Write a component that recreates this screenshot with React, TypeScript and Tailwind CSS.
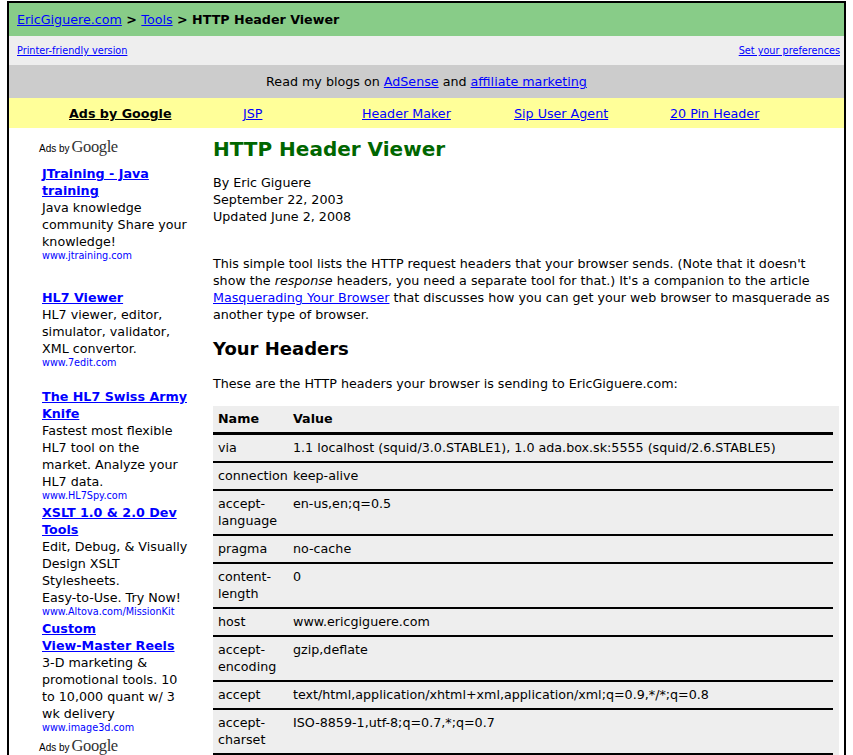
import React from "react";

const ads = [
  {
    title: <>JTraining - Java training</>,
    desc: <>Java knowledge community Share your knowledge!</>,
    url: "www.jtraining.com",
    gap: "pb-[25px]",
  },
  {
    title: <>HL7 Viewer</>,
    desc: <>HL7 viewer, editor, simulator, validator, XML convertor.</>,
    url: "www.7edit.com",
    gap: "pb-[17px]",
  },
  {
    title: <>The HL7 Swiss Army Knife</>,
    desc: <>Fastest most flexible HL7 tool on the market. Analyze your HL7 data.</>,
    url: "www.HL7Spy.com",
    gap: "",
  },
  {
    title: <>XSLT 1.0 &amp; 2.0 Dev Tools</>,
    desc: (
      <>
        Edit, Debug, &amp; Visually Design XSLT Stylesheets.{" "}
        <span className="whitespace-nowrap">Easy-to-Use.</span> Try Now!
      </>
    ),
    url: "www.Altova.com/MissionKit",
    gap: "",
  },
  {
    title: (
      <>
        Custom <span className="whitespace-nowrap">View-Master Reels</span>
      </>
    ),
    desc: <>3-D marketing &amp; promotional tools. 10 to 10,000 quant w/ 3 wk delivery</>,
    url: "www.image3d.com",
    gap: "",
  },
];

const headers = [
  ["via", "1.1 localhost (squid/3.0.STABLE1), 1.0 ada.box.sk:5555 (squid/2.6.STABLE5)"],
  ["connection", "keep-alive"],
  ["accept-language", "en-us,en;q=0.5"],
  ["pragma", "no-cache"],
  ["content-length", "0"],
  ["host", "www.ericgiguere.com"],
  ["accept-encoding", "gzip,deflate"],
  ["accept", "text/html,application/xhtml+xml,application/xml;q=0.9,*/*;q=0.8"],
  ["accept-charset", "ISO-8859-1,utf-8;q=0.7,*;q=0.7"],
  ["user-agent", "Mozilla/5.0 (X11; U; Linux i686; en-US; rv:1.9) Gecko/2008061015 Firefox/3.0"],
  ["keep-alive", "300"],
];

const navLinks = [
  { name: "JSP", w: "w-[119px]" },
  { name: "Header Maker", w: "w-[152px]" },
  { name: "Sip User Agent", w: "w-[156px]" },
  { name: "20 Pin Header", w: "flex-1" },
];

function AdsByGoogle() {
  return (
    <div className="flex items-end h-[16px] text-black">
      <span className="text-[10px] leading-[12px] font-['Liberation_Sans',sans-serif]">Ads by</span>
      <span className="ml-[2px] text-[16.5px] leading-[16px] tracking-[-0.4px] font-['Liberation_Serif',serif] text-[#333]">
        Google
      </span>
    </div>
  );
}

export default function App() {
  return (
    <div className="h-screen overflow-hidden bg-white font-['DejaVu_Sans',sans-serif] text-[12.7px] text-black">
      <div className="mt-[1px] mx-[7px] border-2 border-black border-b-0">
        {/*breadcrumb*/}
        <div className="h-[33px] bg-[#88cc88] pl-[8px] flex items-center">
          <a href="#" className="text-[#0000ff] underline">EricGiguere.com</a>
          <b>&nbsp;&gt;&nbsp;</b>
          <a href="#" className="text-[#0000ff] underline">Tools</a>
          <b>&nbsp;&gt; HTTP Header Viewer</b>
        </div>
        <div className="h-[29px] bg-[#eeeeee] pl-[8px] pr-[4px] pt-[2px] flex items-center justify-between text-[9.7px]">
          <a href="#" className="text-[#0000ff] underline">Printer-friendly version</a>
          <a href="#" className="text-[#0000ff] underline">Set your preferences</a>
        </div>
        <div className="h-[33px] bg-[#cccccc] flex items-center justify-center">
          <span>
            Read my blogs on <a href="#" className="text-[#0000ff] underline">AdSense</a> and{" "}
            <a href="#" className="text-[#0000ff] underline">affiliate marketing</a>
          </span>
        </div>
        <div className="h-[30px] bg-[#ffff99] pt-[1px] flex items-center">
          <div className="w-[234px] pl-[60px]">
            <b className="underline">Ads by Google</b>
          </div>
          {navLinks.map((item) => (
            <div key={item.name} className={item.w}>
              <a href="#" className="text-[#0000ff] underline">{item.name}</a>
            </div>
          ))}
        </div>

        {/*body*/}
        <div className="flex">
          {/*sidebar*/}
          <div className="w-[204px] shrink-0 pl-[30px] pt-[11px]">
            <AdsByGoogle />
            <div className="pl-[3px] pt-[10px] w-[152px]">
              {ads.map((ad) => (
                <div key={ad.url} className={ad.gap}>
                  <a href="#" className="block font-bold text-[#0000ff] underline leading-[17px]">
                    {ad.title}
                  </a>
                  <p className="leading-[17px]">{ad.desc}</p>
                  <a href="#" className="block text-[#0000ff] text-[9.7px] leading-[14px] -mt-[1px] pb-[1px]">
                    {ad.url}
                  </a>
                </div>
              ))}
            </div>
            <div className="mt-[2px]">
              <AdsByGoogle />
            </div>
          </div>

          {/*main*/}
          <div className="flex-1 pt-[9px] pr-[5px] leading-[17px]">
            <h1 className="text-[20px] leading-[24px] font-bold text-[#006600]">HTTP Header Viewer</h1>
            <p className="mt-[13px]">
              By Eric Giguere
              <br />
              September 22, 2003
              <br />
              Updated June 2, 2008
            </p>
            <p className="mt-[30px]">
              This simple tool lists the HTTP request headers that your browser sends. (Note that it doesn't
              show the <i>response</i> headers, you need a separate tool for that.) It's a companion to the
              article <a href="#" className="text-[#0000ff] underline">Masquerading Your Browser</a> that
              discusses how you can get your web browser to masquerade as another type of browser.
            </p>
            <h2 className="mt-[15px] text-[18px] leading-[22px] font-bold">Your Headers</h2>
            <p className="mt-[15px]">These are the HTTP headers your browser is sending to EricGiguere.com:</p>
            <div className="mt-[14px] bg-[#eeeeee] pr-[6px]">
              <div className="flex border-b-[3px] border-black pt-[4px] pb-[5px] font-bold">
                <div className="w-[80px] shrink-0 pl-[5px]">Name</div>
                <div>Value</div>
              </div>
              {headers.map(([name, value]) => (
                <div key={name} className="flex border-b-2 border-black pt-[4px] pb-[5px]">
                  <div className="w-[80px] shrink-0 pl-[5px] pr-[4px]">{name}</div>
                  <div>{value}</div>
                </div>
              ))}
            </div>
          </div>
        </div>
      </div>
    </div>
  );
}
